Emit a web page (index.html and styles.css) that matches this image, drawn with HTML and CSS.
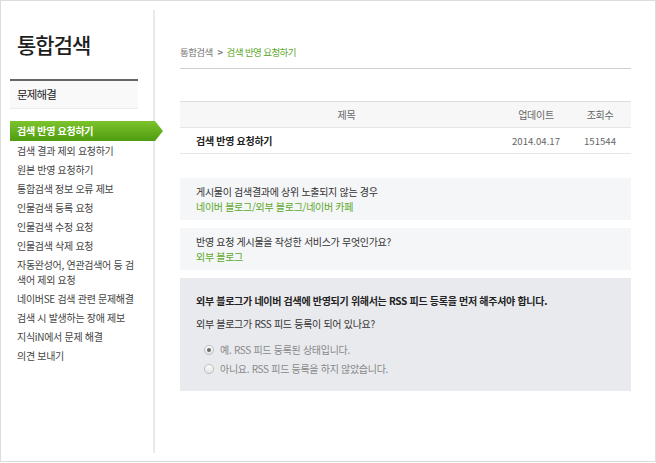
FILE: index.html
```html
<!DOCTYPE html>
<html lang="ko">
<head>
<meta charset="utf-8">
<title>통합검색 - 검색 반영 요청하기</title>
<link rel="stylesheet" href="styles.css">
</head>
<body>
<div class="frame">
  <aside class="side">
    <h1 class="logo">통합검색</h1>
    <div class="cat">문제해결</div>
    <ul class="menu">
      <li class="on">검색 반영 요청하기</li>
      <li>검색 결과 제외 요청하기</li>
      <li>원본 반영 요청하기</li>
      <li>통합검색 정보 오류 제보</li>
      <li>인물검색 등록 요청</li>
      <li>인물검색 수정 요청</li>
      <li>인물검색 삭제 요청</li>
      <li>자동완성어, 연관검색어 등 검<br>색어 제외 요청</li>
      <li>네이버SE 검색 관련 문제해결</li>
      <li>검색 시 발생하는 장애 제보</li>
      <li>지식iN에서 문제 해결</li>
      <li>의견 보내기</li>
    </ul>
  </aside>
  <main class="main">
    <div class="crumb"><span class="crumb-home">통합검색</span><span class="crumb-sep">&gt;</span><span class="crumb-cur">검색 반영 요청하기</span></div>

    <div class="table">
      <div class="thead">
        <div class="c-title">제목</div>
        <div class="c-date">업데이트</div>
        <div class="c-hit">조회수</div>
      </div>
      <div class="trow">
        <div class="c-title">검색 반영 요청하기</div>
        <div class="c-date num">2014.04.17</div>
        <div class="c-hit num">151544</div>
      </div>
    </div>

    <div class="qbox">
      <p>게시물이 검색결과에 상위 노출되지 않는 경우</p>
      <p class="ans">네이버 블로그/외부 블로그/네이버 카페</p>
    </div>
    <div class="qbox">
      <p>반영 요청 게시물을 작성한 서비스가 무엇인가요?</p>
      <p class="ans">외부 블로그</p>
    </div>
    <div class="step">
      <p class="strong">외부 블로그가 네이버 검색에 반영되기 위해서는 RSS 피드 등록을 먼저 해주셔야 합니다.</p>
      <p class="ask">외부 블로그가 RSS 피드 등록이 되어 있나요?</p>
      <ul class="radios">
        <li><span class="radio checked"></span>예. RSS 피드 등록된 상태입니다.</li>
        <li><span class="radio"></span>아니요. RSS 피드 등록을 하지 않았습니다.</li>
      </ul>
    </div>
  </main>
</div>
</body>
</html>
```
FILE: styles.css
```css
* { box-sizing: border-box; }
html, body { margin: 0; padding: 0; background: #fff; }
body {
  font-family: "Noto Sans CJK KR", "Noto Sans", sans-serif;
  font-size: 10px;
  letter-spacing: -0.3px;
  color: #333;
}
p, ul, h1 { margin: 0; padding: 0; }
ul { list-style: none; }

.frame {
  width: 656px;
  height: 462px;
  border: 1px solid #dcdcdc;
  display: flex;
  align-items: flex-start;
}

/* sidebar */
.side {
  width: 154px;
  height: 443px;
  margin-top: 9px;
  padding-left: 9px;
  border-right: 2px solid #e9e9e9;
  flex: none;
}
.logo {
  height: 69px;
  padding: 21px 0 0 7px;
  font-size: 21px;
  line-height: 26px;
  font-weight: 500;
  letter-spacing: -1px;
  color: #1e1e1e;
}
.cat {
  width: 128px;
  height: 30px;
  border-top: 2px solid #666;
  border-bottom: 1px solid #ececec;
  background: #f9f9f9;
  padding-left: 7px;
  line-height: 27px;
  font-size: 11.5px;
  letter-spacing: -0.8px;
  color: #222;
}
.menu { margin-top: 12px; width: 128px; }
.menu li {
  padding: 2px 0 2px 7px;
  line-height: 15px;
  color: #444;
  white-space: nowrap;
}
.menu li.on {
  width: 153px;
  height: 20px;
  line-height: 16px;
  color: #fff;
  font-weight: 700;
  background: linear-gradient(#7dc42c, #4f9c10);
  clip-path: polygon(0 0, 145px 0, 153px 50%, 145px 100%, 0 100%);
}

/* main */
.main {
  flex: 1;
  padding: 0 24px 0 25px;
}
.crumb {
  height: 68px;
  padding-top: 43px;
  line-height: 16px;
  border-bottom: 1px solid #cfcfcf;
  font-size: 9.5px;
  letter-spacing: -0.6px;
}
.crumb-home { color: #777; }
.crumb-sep { color: #777; margin: 0 4px 0 5px; font-weight: 700; }
.crumb-cur { color: #5ba829; }

.table {
  margin-top: 32px;
  border-top: 1px solid #dedede;
}
.thead, .trow {
  display: grid;
  grid-template-columns: 1fr 66px 62px;
  height: 26px;
  align-items: center;
  border-bottom: 1px solid #e6e6e6;
}
.thead { background: #f7f7f7; color: #666; }
.thead > div { text-align: center; }
.thead .c-title { padding-left: 10px; }
.trow .c-title { padding-left: 16px; font-weight: 700; color: #222; }
.trow .c-date, .trow .c-hit { text-align: center; color: #666; }
.num { letter-spacing: 0; font-size: 9.6px; }

.qbox {
  margin-top: 24px;
  background: #f5f6f8;
  padding: 6px 16px;
  height: 42px;
  line-height: 15px;
  color: #333;
}
.qbox + .qbox { margin-top: 8px; }
.qbox .ans { color: #5ba829; }

.step {
  margin-top: 8px;
  background: #e9eaee;
  height: 113px;
  padding: 15px 16px 0;
  line-height: 15px;
}
.step .strong { font-weight: 700; color: #222; margin-bottom: 8px; }
.step .ask { color: #333; margin-bottom: 9px; }
.radios { padding-left: 8px; }
.radios li {
  display: flex;
  align-items: center;
  height: 19px;
  color: #888;
}
.radio {
  width: 10px;
  height: 10px;
  border-radius: 50%;
  border: 1px solid #bdbdbd;
  background: linear-gradient(#fdfdfd, #e4e4e4);
  margin-right: 6px;
  display: flex;
  align-items: center;
  justify-content: center;
  flex: none;
}
.radio.checked::after {
  content: "";
  width: 4px;
  height: 4px;
  border-radius: 50%;
  background: #6a6a6a;
}
```
